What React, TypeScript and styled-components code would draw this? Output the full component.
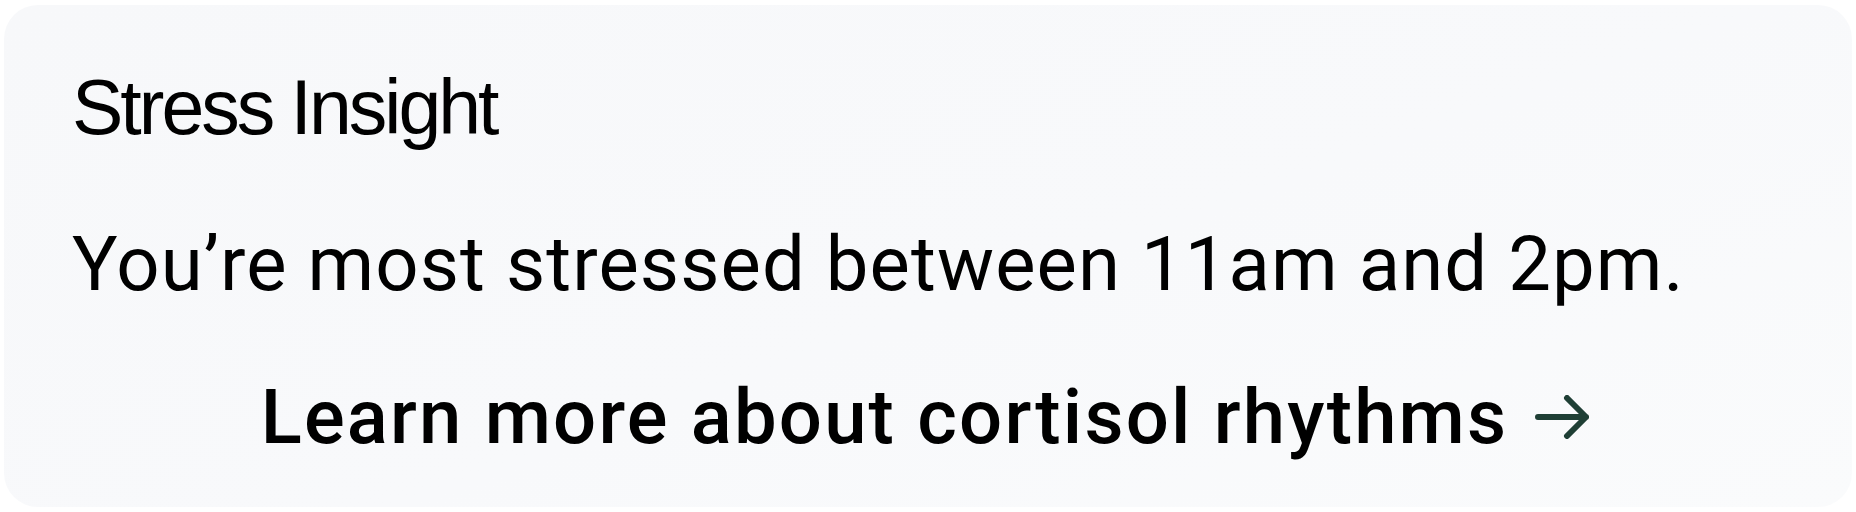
import React from "react";
import styled, { createGlobalStyle } from "styled-components";

const GlobalStyle = createGlobalStyle`
  html, body {
    margin: 0;
    padding: 0;
    background: #ffffff;
  }
  body {
    font-family: Roboto, "Liberation Sans", Arial, sans-serif;
  }
`;

const Page = styled.div`
  padding: 5px 4px;
  box-sizing: border-box;
  width: 1856px;
`;

const Card = styled.section`
  box-sizing: border-box;
  height: 502px;
  border-radius: 34px;
  background: linear-gradient(160deg, #f7f8fa 0%, #f8f9fb 55%, #fafbfc 100%);
  padding: 56px 74px 44px 68px;
  display: flex;
  flex-direction: column;
`;

const Title = styled.h2`
  margin: 0;
  font-family: "Liberation Sans", Arial, sans-serif;
  font-weight: 400;
  font-size: 77px;
  line-height: 1.2;
  letter-spacing: -3px;
  color: #000000;
`;

const Message = styled.p`
  margin: 66px 0 0;
  font-family: Roboto, "Liberation Sans", sans-serif;
  font-weight: 400;
  font-size: 76px;
  line-height: 1.2;
  letter-spacing: 1.1px;
  color: #000000;
`;

const LinkRow = styled.a`
  margin-top: 61px;
  align-self: center;
  display: inline-flex;
  align-items: center;
  gap: 27px;
  font-family: Roboto, "Liberation Sans", sans-serif;
  font-weight: 500;
  font-size: 76px;
  line-height: 1.2;
  letter-spacing: 2.2px;
  color: #000000;
  text-decoration: none;
`;

const Arrow = styled.svg`
  width: 54px;
  height: 44px;
  flex: none;
  margin-top: -1px;
`;

export default function App() {
  return (
    <>
      <GlobalStyle />
      <Page>
        <Card>
          <Title>Stress Insight</Title>
          <Message>You’re most stressed between 11am and 2pm.</Message>
          <LinkRow href="#">
            Learn more about cortisol rhythms
            <Arrow viewBox="0 0 54 44" fill="none" aria-hidden="true">
              <path
                d="M3 22H51M32 3L51 22L32 41"
                stroke="#1f3f35"
                strokeWidth="6"
                strokeLinecap="round"
                strokeLinejoin="round"
              />
            </Arrow>
          </LinkRow>
        </Card>
      </Page>
    </>
  );
}
